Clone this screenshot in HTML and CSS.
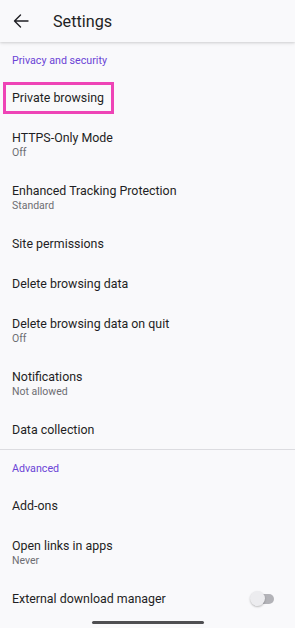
FILE: index.html
```html
<!DOCTYPE html>
<html>
<head>
<meta charset="utf-8">
<link rel="stylesheet" href="styles.css">
</head>
<body>
<div class="screen">
  <header class="appbar">
    <svg class="back" width="16" height="14" viewBox="0 0 16 14"><path d="M15 7H1.5M7.5 1L1.5 7l6 6" fill="none" stroke="#1f1f24" stroke-width="1.4" stroke-linecap="round" stroke-linejoin="round"/></svg>
    <h1 class="title">Settings</h1>
  </header>
  <main class="list">
    <div class="category">Privacy and security</div>
    <div class="row single"><span class="highlight">Private browsing</span></div>
    <div class="row double"><span class="primary">HTTPS-Only Mode</span><span class="secondary">Off</span></div>
    <div class="row double"><span class="primary">Enhanced Tracking Protection</span><span class="secondary">Standard</span></div>
    <div class="row single"><span class="primary">Site permissions</span></div>
    <div class="row single"><span class="primary">Delete browsing data</span></div>
    <div class="row double"><span class="primary">Delete browsing data on quit</span><span class="secondary">Off</span></div>
    <div class="row double"><span class="primary">Notifications</span><span class="secondary">Not allowed</span></div>
    <div class="row single"><span class="primary">Data collection</span></div>
    <div class="divider"></div>
    <div class="category">Advanced</div>
    <div class="row single"><span class="primary">Add-ons</span></div>
    <div class="row double"><span class="primary">Open links in apps</span><span class="secondary">Never</span></div>
    <div class="row single switch-row"><span class="primary">External download manager</span><span class="switch"><span class="track"></span><span class="thumb"></span></span></div>
  </main>
  <div class="home-indicator"></div>
</div>
</body>
</html>
```
FILE: styles.css
```css
* { box-sizing: border-box; }
html, body { margin: 0; padding: 0; }
body {
  background: #f9f9fb;
  font-family: Roboto, "Noto Sans", sans-serif;
  color: #1f1f24;
}
.screen {
  width: 295px;
  height: 628px;
  position: relative;
  overflow: hidden;
  display: flex;
  flex-direction: column;
}
.appbar {
  height: 42px;
  display: flex;
  align-items: center;
  padding-left: 13px;
  background: #f9f9fb;
  box-shadow: 0 1px 2px rgba(0,0,0,0.12), 0 2px 4px rgba(0,0,0,0.05);
  position: relative;
  z-index: 1;
  flex: none;
}
.back { display: block; }
.title {
  margin: 0 0 0 24px;
  font-size: 16.2px;
  font-weight: 400;
  color: #1f1f24;
}
.list { display: flex; flex-direction: column; }
.category {
  height: 36px;
  display: flex;
  align-items: center;
  padding-left: 12px;
  font-size: 10.7px;
  color: #6b44d6;
}
.row {
  display: flex;
  flex-direction: column;
  justify-content: center;
  padding-left: 12px;
}
.row.single { height: 40px; }
.row.double { height: 53px; }
.primary { font-size: 12.4px; line-height: 16px; color: #1f1f24; }
.secondary { font-size: 10.5px; line-height: 13px; color: #6d6d72; }
.highlight {
  align-self: flex-start;
  margin-left: -9px;
  font-size: 12.4px;
  line-height: 16px;
  padding: 5px 7px 5px 6px;
  border: 3px solid #ee44b6;
}
.divider { height: 1px; background: #dcdce0; margin-top: -1px; }
.switch-row {
  flex-direction: row;
  align-items: center;
  justify-content: space-between;
  padding-right: 20px;
}
.switch {
  position: relative;
  width: 25px;
  height: 15px;
  display: block;
}
.track {
  position: absolute;
  left: 6px;
  top: 2px;
  width: 18px;
  height: 10px;
  border-radius: 5px;
  background: #b3b3b8;
}
.thumb {
  position: absolute;
  left: 0;
  top: -1px;
  width: 15px;
  height: 15px;
  border-radius: 50%;
  background: #ececef;
  box-shadow: 0 1px 2px rgba(0,0,0,0.25);
}
.home-indicator {
  position: absolute;
  left: 92px;
  top: 621px;
  width: 112px;
  height: 3px;
  border-radius: 2px;
  background: #4f4f52;
}
```
